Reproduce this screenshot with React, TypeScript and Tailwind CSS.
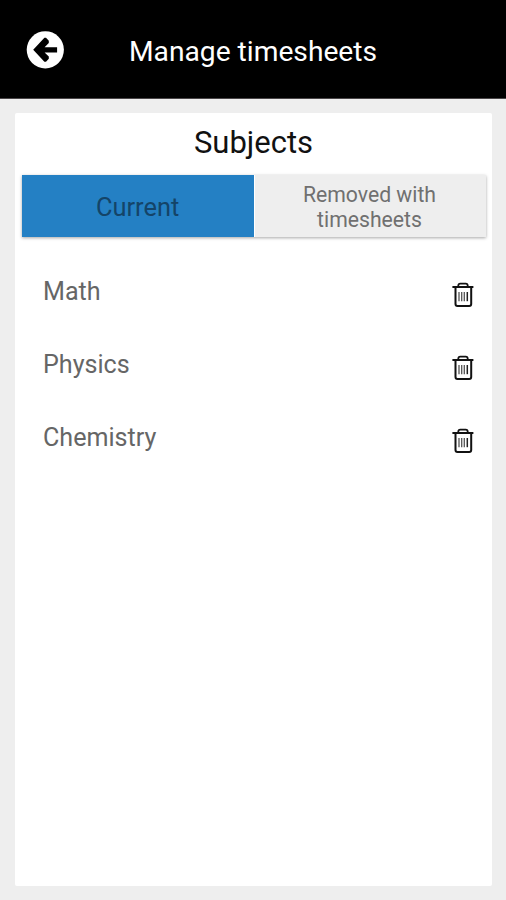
const subjects = ["Math", "Physics", "Chemistry"];

function BackIcon() {
  return (
    <svg width="38" height="38" viewBox="0 0 38 38" aria-hidden="true">
      <circle cx="19.3" cy="18.8" r="18.6" fill="#fff" />
      <path d="M7.2 18.8 18.4 6.8H20L22.8 9.8V12L18.6 16.2H31.1V21.4H18.6L22.8 25.6V27.8L20 30.8H18.4Z" fill="#000" />
    </svg>
  );
}

function TrashIcon() {
  return (
    <svg width="22" height="26" viewBox="0 0 22 26" fill="none" stroke="#111" aria-hidden="true">
      <path d="M.4 5H21.4" strokeWidth="2" />
      <path d="M6.3 4.8V3.6Q6.3 1.6 8.3 1.6H13.7Q15.7 1.6 15.7 3.6V4.8" strokeWidth="1.8" />
      <path d="M3.5 5V22Q3.5 24 5.5 24H17.2Q19.2 24 19.2 22V5" strokeWidth="2" />
      <path d="M7 10V19.2M9.7 10V19.2M12.3 10V19.2" strokeWidth="1.3" stroke="#555" />
      <path d="M15.3 10V19.2" strokeWidth="1.5" stroke="#222" />
    </svg>
  );
}

export default function App() {
  return (
    <div className="flex h-[900px] w-[506px] flex-col bg-[#eeeeee] font-['Roboto',sans-serif]">
      <header className="flex h-[99px] shrink-0 items-center border-b border-[#4a4648] bg-black pl-[26px] text-white">
        <button type="button" aria-label="Back" className="mt-px">
          <BackIcon />
        </button>
        <h1 className="ml-[65px] mt-[5px] whitespace-nowrap text-[28.2px] leading-8">Manage timesheets</h1>
      </header>
      <main className="mb-[14px] ml-[14.6px] mr-[13.6px] mt-[14px] flex-1 rounded-[2px] bg-white px-[7px]">
        <h2 className="flex h-[62px] items-center justify-center pb-[3px] text-[31px] leading-9 text-[#111]">Subjects</h2>
        <div className="flex h-[62.4px] w-[464.8px] bg-[#eeeeee] shadow-[0_1px_3px_rgba(0,0,0,0.35)]">
          <button type="button" className="w-[232px] bg-[#2480c4] pt-[2px] text-[25.4px] text-[#144468]">Current</button>
          <button type="button" className="flex-1 border-l border-white pr-[2px] pt-[1px] text-[21.2px] leading-[25px] text-[#707070]">
            Removed with
            <br />
            timesheets
          </button>
        </div>
        <ul className="mt-[16.6px]">
          {subjects.map((name) => (
            <li key={name} className="flex h-[73px] items-center justify-between pl-[21.4px] pr-[11.4px]">
              <span className="mt-[3.5px] text-[25.1px] leading-8 text-[#666]">{name}</span>
              <button type="button" aria-label={`Remove ${name}`} className="mt-[9px]">
                <TrashIcon />
              </button>
            </li>
          ))}
        </ul>
      </main>
    </div>
  );
}
